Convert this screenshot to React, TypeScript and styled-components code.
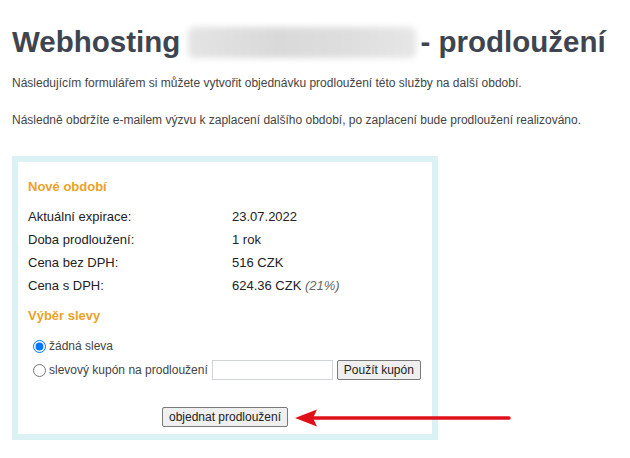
import React from "react";
import styled, { createGlobalStyle } from "styled-components";

const Global = createGlobalStyle`
  html, body { margin: 0; padding: 0; background: #fff; }
  body { font-family: "Liberation Sans", Arial, sans-serif; color: #333; }
`;

const Page = styled.div`
  position: relative;
  width: 630px;
  height: 458px;
  padding: 24px 12px 0;
  box-sizing: border-box;
  overflow: hidden;
`;

const Title = styled.h1`
  margin: 0;
  font-size: 29.5px;
  line-height: 35px;
  font-weight: bold;
  color: #3e4550;
  white-space: nowrap;
`;

const Blur = styled.span`
  display: inline-block;
  width: 228px;
  height: 31px;
  vertical-align: -6px;
  margin-right: 4px;
  border-radius: 6px;
  background: linear-gradient(90deg, #e4e4e4 0%, #d9d9d9 40%, #dedede 70%, #e6e6e6 100%);
  filter: blur(3px);
`;

const Para = styled.p<{ $top: number }>`
  margin: 0;
  font-size: 12px;
  line-height: 16px;
  color: #444;
  margin-top: ${(p) => p.$top}px;
`;

const Box = styled.div`
  margin-top: 28px;
  width: 426px;
  border: 6px solid #dbf1f4;
  box-sizing: border-box;
  background: #fff;
  padding: 16px 10px 7px;
`;

const Section = styled.div<{ $top?: number }>`
  font-size: 13px;
  line-height: 18px;
  font-weight: bold;
  color: #eba227;
  margin-top: ${(p) => p.$top ?? 0}px;
`;

const Table = styled.div`
  display: grid;
  grid-template-columns: 204px 1fr;
  grid-auto-rows: 23px;
  align-items: center;
  margin-top: 9px;
  font-size: 13px;
  color: #222;
`;

const Muted = styled.i`
  color: #666;
`;

const Options = styled.div`
  margin-top: 10px;
  display: flex;
  flex-direction: column;
  gap: 1px;
`;

const OptionRow = styled.label<{ $h: number }>`
  display: flex;
  align-items: center;
  height: ${(p) => p.$h}px;
  font-size: 12px;
  color: #444;
`;

const Radio = styled.input`
  width: 13px;
  height: 13px;
  margin: 0 3px 0 5px;
`;

const TextInput = styled.input`
  width: 121px;
  height: 20px;
  box-sizing: border-box;
  border: 1px solid #cfd4d8;
  margin: 0 4px 0 4px;
  padding: 0 3px;
  font-size: 12px;
`;

const Btn = styled.button`
  height: 20px;
  box-sizing: border-box;
  padding: 0 6px;
  border: 1px solid #7a7a7a;
  border-radius: 2px;
  background: #efefef;
  font-family: "Liberation Sans", Arial, sans-serif;
  font-size: 12px;
  color: #222;
  cursor: pointer;
`;

const Actions = styled.div`
  display: flex;
  justify-content: center;
  margin-top: 25px;
`;

const Arrow = styled.svg`
  position: absolute;
  left: 294px;
  top: 408px;
`;

export default function App() {
  return (
    <>
      <Global />
      <Page>
        <Title>
          Webhosting <Blur />- prodloužení
        </Title>
        <Para $top={16}>
          Následujícím formulářem si můžete vytvořit objednávku prodloužení této služby na další období.
        </Para>
        <Para $top={21}>
          Následně obdržíte e-mailem výzvu k zaplacení dalšího období, po zaplacení bude prodloužení realizováno.
        </Para>
        <Box>
          <Section>Nové období</Section>
          <Table>
            <span>Aktuální expirace:</span>
            <span>23.07.2022</span>
            <span>Doba prodloužení:</span>
            <span>1 rok</span>
            <span>Cena bez DPH:</span>
            <span>516 CZK</span>
            <span>Cena s DPH:</span>
            <span>
              624.36 CZK <Muted>(21%)</Muted>
            </span>
          </Table>
          <Section $top={10}>Výběr slevy</Section>
          <Options>
            <OptionRow $h={22}>
              <Radio type="radio" name="sleva" defaultChecked />
              žádná sleva
            </OptionRow>
            <OptionRow $h={24}>
              <Radio type="radio" name="sleva" />
              slevový kupón na prodloužení
              <TextInput type="text" />
              <Btn type="button">Použít kupón</Btn>
            </OptionRow>
          </Options>
          <Actions>
            <Btn type="button">objednat prodloužení</Btn>
          </Actions>
        </Box>
        <Arrow width="220" height="20" viewBox="0 0 220 20">
          <line x1="18" y1="10" x2="215" y2="10" stroke="#e0101b" strokeWidth="3.5" strokeLinecap="round" />
          <polygon points="1,10 23,1.5 19,10 23,18.5" fill="#e0101b" />
        </Arrow>
      </Page>
    </>
  );
}
